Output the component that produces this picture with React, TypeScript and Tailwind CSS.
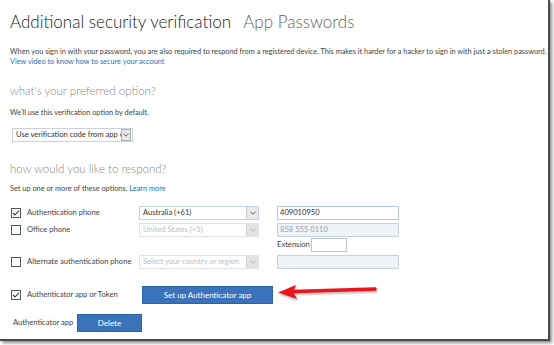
import React from "react";

const font = { fontFamily: 'Lato, "Open Sans", sans-serif' };

function Check({ checked }: { checked?: boolean }) {
  return (
    <div className="w-[10px] h-[10px] border border-[#555] bg-white flex items-center justify-center shrink-0">
      {checked && (
        <svg width="8" height="8" viewBox="0 0 8 8">
          <path d="M1 4 L3 6 L7 1.5" fill="none" stroke="#333" strokeWidth="1.1" />
        </svg>
      )}
    </div>
  );
}

function Select({ text, disabled, w }: { text: string; disabled?: boolean; w: string }) {
  return (
    <div className={`${w} h-[14px] border flex items-center ${disabled ? "border-[#dde3ea] bg-white text-[#b8c0c8]" : "border-[#c5d3e3] bg-white text-[#333]"}`}>
      <span className="flex-1 pl-[3px] text-[7.6px] leading-none whitespace-nowrap">{text}</span>
      <div className={`w-[12px] h-full flex items-center justify-center border-l ${disabled ? "bg-[#e3e3e3] border-[#d0d0d0]" : "bg-[#e8e8e8] border-[#c8c8c8]"}`}>
        <svg width="6" height="4" viewBox="0 0 6 4">
          <path d="M0.5 0.8 L3 3.2 L5.5 0.8" fill="none" stroke={disabled ? "#b0b0b0" : "#555"} strokeWidth="0.9" />
        </svg>
      </div>
    </div>
  );
}

function Input({ text, disabled, w }: { text?: string; disabled?: boolean; w: string }) {
  return (
    <div className={`${w} h-[14px] border flex items-center pl-[2px] text-[7.6px] leading-none ${disabled ? "border-[#c5d3e3] bg-[#eef3f8] text-[#9aa3ad]" : "border-[#b8c8da] bg-white text-[#333]"}`}>
      {text}
    </div>
  );
}

export default function App() {
  return (
    <div className="w-[554px] h-[345px] bg-white overflow-hidden relative" style={font}>
      <div className="w-[550px] h-[341px] border-r-2 border-b-2 border-[#4a4a4a] shadow-[2px_2px_3px_rgba(0,0,0,0.45)] relative">
        <div className="pl-[10px] pt-[8px]">
          <div className="flex items-baseline text-[17px] font-light leading-[28px]">
            <span className="text-[#222]">Additional security verification</span>
            <span className="ml-[12px] text-[#666]">App Passwords</span>
          </div>
          <div className="mt-[10px] text-[7.35px] leading-[11px] text-[#444] whitespace-nowrap">
            When you sign in with your password, you are also required to respond from a registered device. This makes it harder for a hacker to sign in with just a stolen password.
          </div>
          <div className="text-[7.35px] leading-[10px] text-[#2672b9]">View video to know how to secure your account</div>

          <div className="mt-[15px] text-[11.5px] font-light leading-[18px] text-[#888]">what's your preferred option?</div>
          <div className="mt-[8px] text-[7.35px] leading-[10px] text-[#444]">We'll use this verification option by default.</div>
          <div className="mt-[10px] ml-[2px] w-[121px] h-[14px] border border-[#c5d3e3] flex items-center">
            <span className="flex-1 pl-[3px] text-[7.6px] leading-none text-[#333] whitespace-nowrap overflow-hidden">Use verification code from app or token</span>
            <div className="w-[10px] h-[12px] mr-[1px] bg-[#e8e8e8] border border-[#b0b0b0] flex items-center justify-center">
              <svg width="6" height="4" viewBox="0 0 6 4">
                <path d="M0.5 0.8 L3 3.2 L5.5 0.8" fill="none" stroke="#555" strokeWidth="0.9" />
              </svg>
            </div>
          </div>

          <div className="mt-[18px] text-[11.5px] font-light leading-[18px] text-[#888]">how would you like to respond?</div>
          <div className="mt-[6px] text-[7.35px] leading-[10px] text-[#444]">
            Set up one or more of these options. <span className="text-[#2672b9]">Learn more</span>
          </div>

          <div className="mt-[12px] flex flex-col text-[7.6px] text-[#444]">
            <div className="flex items-center h-[14px]">
              <div className="w-[129px] flex items-center gap-[6px] pl-[1px]">
                <Check checked />
                <span>Authentication phone</span>
              </div>
              <Select text="Australia (+61)" w="w-[120px]" />
              <div className="ml-[18px]"><Input text="409010950" w="w-[122px]" /></div>
            </div>
            <div className="flex items-center h-[14px] mt-[3px]">
              <div className="w-[129px] flex items-center gap-[6px] pl-[1px]">
                <Check />
                <span>Office phone</span>
              </div>
              <Select text="United States (+1)" disabled w="w-[120px]" />
              <div className="ml-[18px]"><Input text="858 555 0110" disabled w="w-[122px]" /></div>
            </div>
            <div className="flex items-center h-[14px] mt-[1px] pl-[267px]">
              <span className="mr-[1px]">Extension</span>
              <div className="w-[36px] h-[14px] border border-[#b8c8da] bg-white" />
            </div>
            <div className="flex items-center h-[14px] mt-[3px]">
              <div className="w-[129px] flex items-center gap-[6px] pl-[1px]">
                <Check />
                <span>Alternate authentication phone</span>
              </div>
              <Select text="Select your country or region" disabled w="w-[120px]" />
              <div className="ml-[18px]"><Input disabled w="w-[122px]" /></div>
            </div>
            <div className="flex items-center h-[18px] mt-[17px]">
              <div className="w-[132px] flex items-center gap-[6px] pl-[1px]">
                <Check checked />
                <span>Authenticator app or Token</span>
              </div>
              <div className="w-[131px] h-[18px] bg-[#3a73ba] border border-[#2d64a8] text-white text-[8px] flex items-center justify-center">
                Set up Authenticator app
              </div>
            </div>
            <div className="flex items-center h-[18px] mt-[10px]">
              <span className="ml-[3px] w-[64px]">Authenticator app</span>
              <div className="w-[65px] h-[18px] bg-[#3a73ba] border border-[#2d64a8] text-white text-[8px] flex items-center justify-center">
                Delete
              </div>
            </div>
          </div>
        </div>
        <svg className="absolute left-[274px] top-[280px]" width="110" height="24" viewBox="0 0 110 24">
          <defs>
            <filter id="sh" x="-20%" y="-50%" width="140%" height="200%">
              <feDropShadow dx="1" dy="1.5" stdDeviation="1" floodColor="#000" floodOpacity="0.35" />
            </filter>
          </defs>
          <g filter="url(#sh)">
            <path d="M20 11.5 L101 9" stroke="#e8141b" strokeWidth="3.4" strokeLinecap="round" fill="none" />
            <path d="M4 12.5 L22 5 L19 12 L23 19 Z" fill="#e8141b" />
          </g>
        </svg>
      </div>
    </div>
  );
}
